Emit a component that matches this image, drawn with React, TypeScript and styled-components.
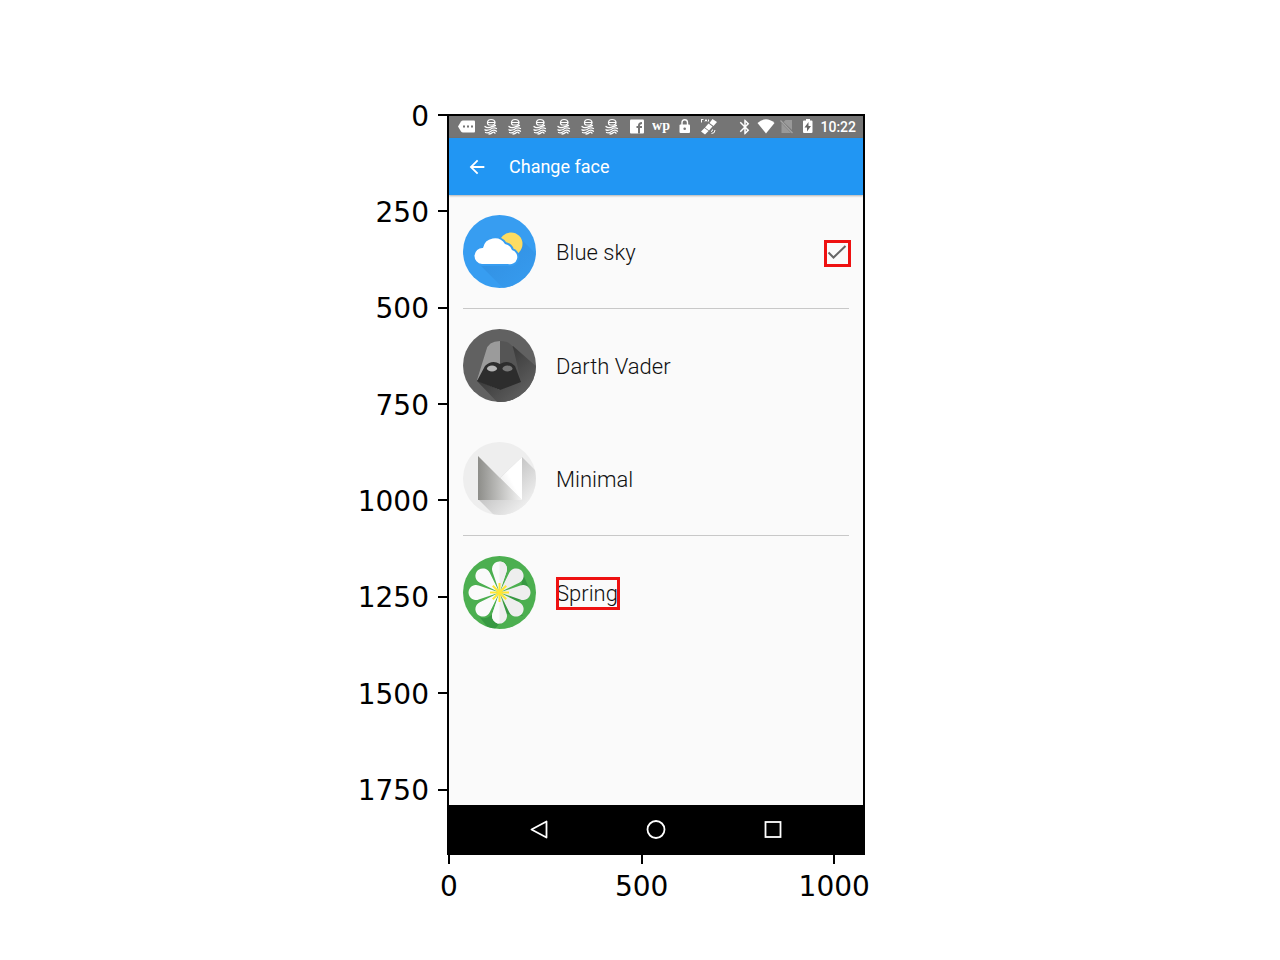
import React from "react";
import styled, { createGlobalStyle } from "styled-components";
import { MdArrowBack, MdBluetooth } from "react-icons/md";

const GlobalStyle = createGlobalStyle`
  *, *::before, *::after { box-sizing: border-box; }
  body { margin: 0; background: #fff; }
  h1, ul, ol { margin: 0; padding: 0; list-style: none; }
  button { margin: 0; padding: 0; border: 0; background: none; color: inherit; font: inherit; cursor: pointer; }
  svg { display: block; flex: none; }
`;

const Figure = styled.main`
  display: grid;
  grid-template-columns: 447fr 418fr 415fr;
  padding: 114px 0 48px;
  font-family: "DejaVu Sans", sans-serif;
  font-size: 28px;
  line-height: 32px;
  color: #000;
`;

const YAxis = styled.ol`
  display: flex;
  flex-direction: column;
  padding: 1px 0 0;
`;

const YTick = styled.li<{ $span: number }>`
  flex: ${(p) => p.$span} 0 0;
  min-height: 0;
`;

const YMark = styled.div`
  display: flex;
  align-items: center;
  justify-content: flex-end;
  gap: 9px;
  height: 0;

  &::after {
    content: "";
    width: 9px;
    height: 2px;
    background: #000;
  }
`;

const YLabel = styled.span`
  padding-top: 3px;
`;

const XAxis = styled.ol`
  grid-column: 2;
  display: flex;
  padding: 0 0 0 2px;
`;

const XTick = styled.li<{ $span: number }>`
  flex: ${(p) => p.$span} 0 0;
  min-width: 0;
`;

const XMark = styled.div`
  display: flex;
  flex-direction: column;
  align-items: center;
  gap: 7px;
  width: 0;

  &::before {
    content: "";
    width: 2px;
    height: 9px;
    background: #000;
  }
`;

const Screen = styled.section`
  display: flex;
  flex-direction: column;
  aspect-ratio: 418 / 741;
  border: 2px solid #000;
  background: #fafafa;
  font-family: Roboto, sans-serif;
`;

const StatusBar = styled.div`
  display: flex;
  align-items: center;
  gap: 18px;
  height: 22px;
  padding: 0 7px 0 9px;
  background: #757575;
  color: #fff;
`;

const Notifications = styled.div`
  display: flex;
  flex: 1;
  justify-content: space-between;
`;

const SystemIcons = styled.div`
  display: flex;
  align-items: center;
  gap: 3px;
`;

const Clock = styled.time`
  font-size: 14px;
  line-height: 16px;
  font-weight: 500;
`;

const Toolbar = styled.header`
  display: flex;
  align-items: center;
  gap: 21px;
  height: 57px;
  padding: 0 17px;
  background: #2196f3;
  color: #fff;
  box-shadow: 0 1px 2px rgba(0, 0, 0, 0.3);
`;

const Title = styled.h1`
  font-size: 18px;
  line-height: 24px;
  font-weight: 400;
`;

const FaceList = styled.ul`
  flex: 1;
  padding: 0 14px;
`;

const FaceItem = styled.li<{ $divided?: boolean }>`
  border-bottom: ${(p) => (p.$divided ? "1px solid #c8c8c8" : "0")};
`;

const FaceButton = styled.button`
  display: flex;
  align-items: center;
  gap: 20px;
  width: 100%;
  height: 113px;
  text-align: left;
`;

const FaceName = styled.span`
  display: block;
  padding-top: 3px;
  font-size: 22px;
  line-height: 28px;
  font-weight: 300;
  color: #111;
`;

const Marked = styled.span<{ $end?: boolean }>`
  position: relative;
  display: block;
  margin-left: ${(p) => (p.$end ? "auto" : "0")};

  &::after {
    content: "";
    position: absolute;
    inset: ${(p) => (p.$end ? "0 -2px -3px -1px" : "0 -2px -2px 0")};
    border: 3px solid #ee1111;
  }
`;

const NavBar = styled.nav`
  display: flex;
  align-items: center;
  justify-content: center;
  gap: 93px;
  height: 48px;
  background: #000;
  color: #fff;
`;

const MessageIcon = () => (
  <svg width="18" height="18" viewBox="0 0 18 18" aria-hidden="true">
    <path d="M5 2.500H16Q17 2.500 17 3.500V13.500Q17 14.500 16 14.500H5Q3.800 14.500 3 13.500L0 8.500L3 3.500Q3.800 2.500 5 2.500Z" fill="#fff" />
    <path d="M5 7.500h2v2H5zM9 7.500h2v2H9zM13 7.500h2v2h-2z" fill="#757575" />
  </svg>
);

const WaveIcon = () => (
  <svg width="18" height="18" viewBox="0 0 18 18" fill="none" stroke="#fff" strokeLinecap="round" aria-hidden="true">
    <path d="M5.500 5V4Q6 1.500 9 1.500Q12.500 1.500 13 4V5Q12.500 7 10.500 7H7.500Q5.500 7 5.500 5ZM5.500 4.500H13" strokeWidth="1.200" />
    <path d="M3 8.500Q5 10.500 8.500 9.200Q11 8 13.500 7.500M3 11.800Q5 12.800 8 11.500Q11.500 9 14.500 10.500M3.500 14.500Q6 15.500 8.500 13.500Q11.500 10.800 14.500 13.200M7 16Q9 16 10.500 14.500Q12 13.500 13 15.200" strokeWidth="1.300" />
  </svg>
);

const FacebookIcon = () => (
  <svg width="18" height="18" viewBox="0 0 18 18" aria-hidden="true">
    <rect x="2" y="1.500" width="14" height="14" rx="1" fill="#fff" />
    <path d="M11 15.500V7.500Q11 5 14 5M8.500 9H14" stroke="#757575" strokeWidth="2" fill="none" />
  </svg>
);

const PostIcon = () => (
  <svg width="18" height="18" viewBox="0 0 18 18" aria-hidden="true">
    <text x="9" y="12" textAnchor="middle" fill="#fff" fontFamily="Liberation Serif, serif" fontWeight="700" fontSize="14">wp</text>
  </svg>
);

const LockIcon = () => (
  <svg width="18" height="18" viewBox="0 0 18 18" aria-hidden="true">
    <rect x="3.500" y="6.500" width="10.500" height="8.500" rx="1" fill="#fff" />
    <path d="M6 7V4.500Q6 1.800 8.700 1.800T11.500 4.500V7" fill="none" stroke="#fff" strokeWidth="1.400" />
    <circle cx="8.700" cy="10.700" r="1.300" fill="#757575" />
  </svg>
);

const SatelliteIcon = () => (
  <svg width="18" height="18" viewBox="0 0 18 18" fill="#fff" aria-hidden="true">
    <path d="M12.500 1L17 4L13.500 8L9.500 5ZM8.500 5.500L12.500 8.500L9 12.500L5 9.500ZM4.500 10L8.500 13L5 16.500L1 13.500Z" />
    <path d="M1 1.500h2.500M1.500 1.500v3M5 3.500l1-2l1 2M8.500 1.500v2" stroke="#fff" fill="none" />
    <path d="M11 13.500q1.500 0 1.500-2M11.500 15.500q3.500 0 3.500-3.500" fill="none" stroke="#fff" />
  </svg>
);

const WifiIcon = () => (
  <svg width="18" height="18" viewBox="0 0 18 18" aria-hidden="true">
    <path d="M9 15.500L0.500 5Q9-2.500 17.500 5Z" fill="#fff" />
  </svg>
);

const NoSimIcon = () => (
  <svg width="18" height="18" viewBox="0 0 18 18" aria-hidden="true">
    <path d="M7.500 2H14V12L5.500 4ZM3.500 5L13 15H3.500Z" fill="#999" />
    <path d="M2.500 2.500L14.500 15" stroke="#a5a5a5" strokeWidth="1.200" />
  </svg>
);

const BatteryIcon = () => (
  <svg width="18" height="18" viewBox="0 0 18 18" aria-hidden="true">
    <path d="M7 1H11V2.500H12.500Q13.500 2.500 13.500 3.500V14Q13.500 15 12.500 15H5Q4 15 4 14V3.500Q4 2.500 5 2.500H7Z" fill="#fff" />
    <path d="M9.500 4V8H12L8 13.500V9.500H5.500Z" fill="#666" />
  </svg>
);

const CheckIcon = () => (
  <svg width="24" height="24" viewBox="0 0 24 24" aria-hidden="true">
    <path d="M3.500 12.500L8.500 17.500L20.500 6" fill="none" stroke="#666" strokeWidth="2" />
  </svg>
);

const BlueSkyArt = () => (
  <svg width="73" height="73" viewBox="0 0 73 73" aria-hidden="true">
    <defs>
      <clipPath id="skyDisc"><circle cx="36.500" cy="36.500" r="36.500" /></clipPath>
      <linearGradient id="skyShade" x1="0" y1="0" x2="1" y2="1">
        <stop offset="0.3" stopColor="#2d84d4" />
        <stop offset="1" stopColor="#379df1" />
      </linearGradient>
    </defs>
    <g clipPath="url(#skyDisc)">
      <rect width="73" height="73" fill="#379df1" />
      <path d="M14 47L42 75L75 75V41L57 23L50 46Z" fill="url(#skyShade)" opacity="0.45" />
      <circle cx="48" cy="29" r="11.500" fill="#fcdc62" />
      <path d="M19 49A8 8 0 0 1 20 33A12 12 0 0 1 42 29A9 9 0 0 1 49 35A7 7 0 0 1 45 49Z" fill="#fff" stroke="#379df1" strokeWidth="4" />
      <path d="M19 49A8 8 0 0 1 20 33A12 12 0 0 1 42 29A9 9 0 0 1 49 35A7 7 0 0 1 45 49Z" fill="#fff" />
    </g>
  </svg>
);

const VaderArt = () => (
  <svg width="73" height="73" viewBox="0 0 73 73" aria-hidden="true">
    <defs>
      <clipPath id="vaderDisc"><circle cx="36.500" cy="36.500" r="36.500" /></clipPath>
      <linearGradient id="vaderShade" x1="0" y1="0" x2="1" y2="1">
        <stop offset="0.2" stopColor="#333" />
        <stop offset="0.85" stopColor="#616161" />
      </linearGradient>
    </defs>
    <g clipPath="url(#vaderDisc)">
      <rect width="73" height="73" fill="#616161" />
      <path d="M14 52L36 75H75V39L50 17Z" fill="url(#vaderShade)" />
      <path d="M37 12Q25 12 23 22L14 51L37 61Z" fill="#9b9b9b" />
      <path d="M37 12Q49 12 51 22L58 52L37 61Z" fill="#555" />
      <path d="M14 52L22 37Q29 30 37 35Q45 30 52 37L58 53L37 61Z" fill="#2d2d2d" />
      <ellipse cx="29" cy="39.500" rx="5" ry="3" fill="#b5b5b5" />
      <ellipse cx="44.500" cy="39.500" rx="5" ry="3" fill="#777" />
    </g>
  </svg>
);

const MinimalArt = () => (
  <svg width="73" height="73" viewBox="0 0 73 73" aria-hidden="true">
    <defs>
      <clipPath id="minimalDisc"><circle cx="36.500" cy="36.500" r="36.500" /></clipPath>
      <linearGradient id="minimalFold"><stop stopColor="#8d8d89" /><stop offset="1" stopColor="#f4f4f4" /></linearGradient>
      <linearGradient id="minimalWing" x1="0" y1="1" x2="1" y2="0"><stop stopColor="#e4e4e4" /><stop offset="0.5" stopColor="#fff" /></linearGradient>
      <linearGradient id="minimalShade" x1="0" y1="0" x2="1" y2="1"><stop offset="0.2" stopColor="#b5b5b5" /><stop offset="0.8" stopColor="#eee" /></linearGradient>
    </defs>
    <g clipPath="url(#minimalDisc)">
      <rect width="73" height="73" fill="#eee" />
      <path d="M15 57L33 75H75V31L59 15Z" fill="url(#minimalShade)" />
      <path d="M59 15V58L37 36Z" fill="url(#minimalWing)" />
      <path d="M15 14L59 58H15Z" fill="url(#minimalFold)" />
    </g>
  </svg>
);

const SpringArt = () => (
  <svg width="73" height="73" viewBox="0 0 73 73" aria-hidden="true">
    <defs>
      <clipPath id="springDisc"><circle cx="36.500" cy="36.500" r="36.500" /></clipPath>
    </defs>
    <g clipPath="url(#springDisc)">
      <rect width="73" height="73" fill="#4caf50" />
      <path d="M15 59Q20 66 30 58L37 48L58 32L60 18L66 32Q64 44 50 46L60 60L44 58L32 73H26Z" fill="#2f8f3c" opacity="0.7" />
      {[0, 45, 90, 135, 180, 225, 270, 315].map((angle) => (
        <g key={angle} transform={`rotate(${angle} 36.5 36.5)`}>
          <path d="M36.500 36.500L29.500 15.700A7.500 7.500 0 1 1 43.500 15.700Z" fill={angle > 0 && angle <= 180 ? "#eee" : "#fafafa"} />
          {angle % 180 === 0 && <path d="M36.500 5.500A7.500 7.500 0 0 1 43.500 15.700L36.500 36.500Z" fill={angle ? "#fafafa" : "#eee"} />}
        </g>
      ))}
      {[0, 45, 90, 135, 180, 225, 270, 315].map((angle) => (
        <path key={angle} d="M36.500 36.500V27" stroke="#ffe733" strokeWidth="2" transform={`rotate(${angle} 36.5 36.5)`} />
      ))}
    </g>
  </svg>
);

const yTicks = [0, 250, 500, 750, 1000, 1250, 1500, 1750];
const xTicks = [0, 500, 1000];

export default function App() {
  return (
    <>
      <GlobalStyle />
      <Figure>
        <YAxis>
          {yTicks.map((value) => (
            <YTick key={value} $span={Math.min(250, 1920 - value)}>
              <YMark><YLabel>{value}</YLabel></YMark>
            </YTick>
          ))}
        </YAxis>
        <Screen>
          <StatusBar>
            <Notifications>
              <MessageIcon />
              {[1, 2, 3, 4, 5, 6].map((n) => <WaveIcon key={n} />)}
              <FacebookIcon />
              <PostIcon />
              <LockIcon />
              <SatelliteIcon />
            </Notifications>
            <SystemIcons>
              <MdBluetooth size={18} />
              <WifiIcon />
              <NoSimIcon />
              <BatteryIcon />
              <Clock>10:22</Clock>
            </SystemIcons>
          </StatusBar>
          <Toolbar>
            <button type="button" aria-label="Back"><MdArrowBack size={22} /></button>
            <Title>Change face</Title>
          </Toolbar>
          <FaceList>
            <FaceItem $divided>
              <FaceButton type="button" aria-pressed="true">
                <BlueSkyArt />
                <FaceName>Blue sky</FaceName>
                <Marked $end><CheckIcon /></Marked>
              </FaceButton>
            </FaceItem>
            <FaceItem>
              <FaceButton type="button" aria-pressed="false">
                <VaderArt />
                <FaceName>Darth Vader</FaceName>
              </FaceButton>
            </FaceItem>
            <FaceItem $divided>
              <FaceButton type="button" aria-pressed="false">
                <MinimalArt />
                <FaceName>Minimal</FaceName>
              </FaceButton>
            </FaceItem>
            <FaceItem>
              <FaceButton type="button" aria-pressed="false">
                <SpringArt />
                <Marked><FaceName>Spring</FaceName></Marked>
              </FaceButton>
            </FaceItem>
          </FaceList>
          <NavBar>
            <button type="button" aria-label="Back">
              <svg width="24" height="24" viewBox="0 0 24 24"><path d="M19.500 4.500V20.500L4.500 12.500Z" fill="none" stroke="#fff" strokeWidth="1.800" strokeLinejoin="round" /></svg>
            </button>
            <button type="button" aria-label="Home">
              <svg width="24" height="24" viewBox="0 0 24 24"><circle cx="12" cy="12.500" r="8.500" fill="none" stroke="#fff" strokeWidth="1.800" /></svg>
            </button>
            <button type="button" aria-label="Recent apps">
              <svg width="24" height="24" viewBox="0 0 24 24"><rect x="4.500" y="5" width="15" height="15" fill="none" stroke="#fff" strokeWidth="1.800" /></svg>
            </button>
          </NavBar>
        </Screen>
        <XAxis>
          {xTicks.map((value) => (
            <XTick key={value} $span={Math.min(500, 1080 - value)}>
              <XMark>{value}</XMark>
            </XTick>
          ))}
        </XAxis>
      </Figure>
    </>
  );
}
